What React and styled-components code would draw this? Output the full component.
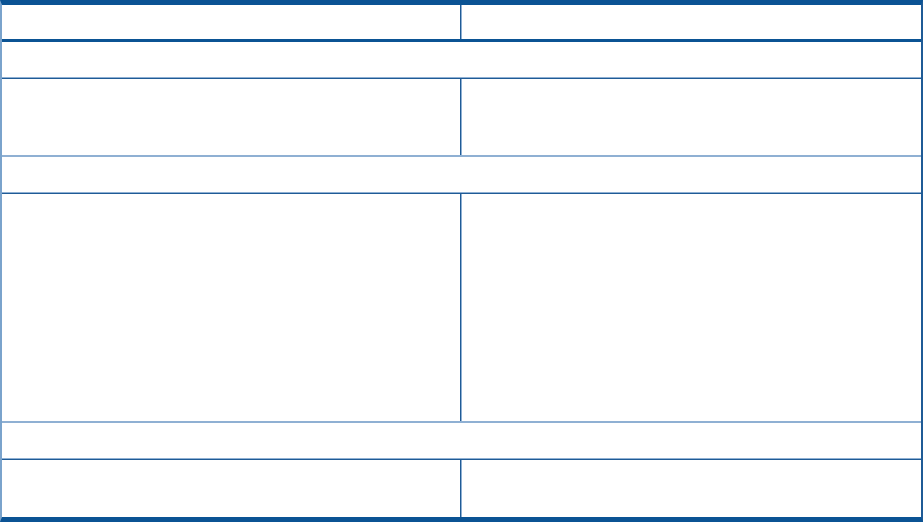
import React from "react";
import styled, { createGlobalStyle } from "styled-components";

const DARK = "#0b5394";
const LINE = "#1f5b96";
const LIGHT = "#8fb0d3";

const GlobalStyle = createGlobalStyle`
  html, body {
    margin: 0;
    padding: 0;
    background: #ffffff;
    font-family: "Liberation Sans", Arial, sans-serif;
  }
`;

const sections = [
  { rowHeight: 76 },
  { rowHeight: 227 },
  { rowHeight: 54 },
];

const App = () => {
  return (
    <>
      <GlobalStyle />
      <Table>
        <HeaderRow>
          <Cell $divider />
          <Cell />
        </HeaderRow>
        {sections.map((s, i) => (
          <React.Fragment key={i}>
            <SectionRow />
            <DataRow $height={s.rowHeight} $last={i === sections.length - 1}>
              <Cell $divider />
              <Cell />
            </DataRow>
          </React.Fragment>
        ))}
      </Table>
    </>
  );
};

export default App;

const Table = styled.div`
  box-sizing: border-box;
  width: 923px;
  height: 522px;
  display: flex;
  flex-direction: column;
  border-top: 5px solid ${DARK};
  border-bottom: 5px solid ${DARK};
  border-left: 2px solid #7aa3cc;
  border-right: 2px solid ${LINE};
`;

const HeaderRow = styled.div`
  display: grid;
  grid-template-columns: 459px 1fr;
  height: 34px;
  border-bottom: 3px solid ${DARK};
`;

const SectionRow = styled.div`
  height: 35px;
  border-bottom: 1px solid ${LIGHT};
`;

const DataRow = styled.div`
  display: grid;
  grid-template-columns: 459px 1fr;
  height: ${(p) => p.$height}px;
  border-top: 1px solid ${LINE};
  border-bottom: ${(p) => (p.$last ? "none" : `2px solid ${LIGHT}`)};
  flex: ${(p) => (p.$last ? "1" : "none")};
`;

const Cell = styled.div`
  box-sizing: border-box;
  border-right: ${(p) => (p.$divider ? `1px solid ${LINE}` : "none")};
  box-shadow: ${(p) => (p.$divider ? `1px 0 0 ${LIGHT}` : "none")};
`;
